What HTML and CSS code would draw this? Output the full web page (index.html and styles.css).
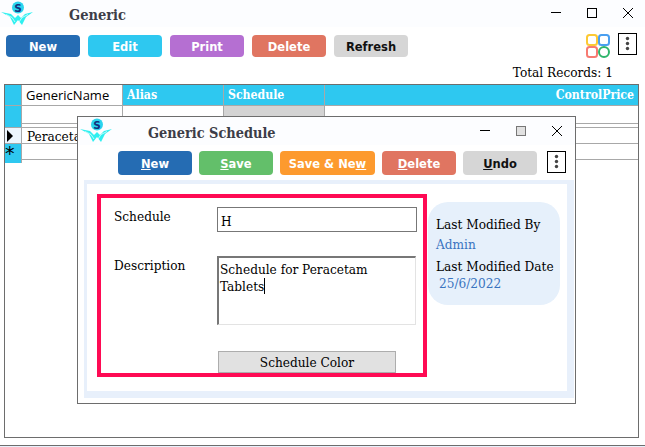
FILE: index.html
```html
<!DOCTYPE html>
<html lang="en">
<head>
    <meta charset="UTF-8">
    <meta name="viewport" content="width=device-width, initial-scale=1.0">
    <title>Generic</title>
    <link rel="stylesheet" href="styles.css">
</head>
<body>
    <svg class="defs" width="0" height="0">
        <symbol id="wings" viewBox="0 0 34 26">
            <path d="M1 11 L11 13 L15 17 L18 14 L21 17 L25 13 L33 11 L26 16 L22 24 L18 19 L14 24 L10 16 Z" fill="#2ff0f0"/>
            <path d="M6 13.5 L12 16.5 L15 21 M28 13.5 L22 16.5 L19 21" stroke="#fff" stroke-width="0.7" fill="none"/>
        </symbol>
        <symbol id="dots" viewBox="0 0 17 20">
            <circle cx="8.5" cy="4.5" r="1.7" fill="#444"/>
            <circle cx="8.5" cy="9.5" r="1.7" fill="#444"/>
            <circle cx="8.5" cy="14.5" r="1.7" fill="#444"/>
        </symbol>
    </svg>

    <div class="main-window">
        <header class="titlebar">
            <svg class="logo" viewBox="0 0 34 26">
                <circle cx="18" cy="6.5" r="6" fill="#2ad4ee"/>
                <text x="18" y="10.5" text-anchor="middle" class="logo-s">S</text>
                <use href="#wings" width="34" height="26"/>
            </svg>
            <h1 class="title">Generic</h1>
            <div class="win-controls">
                <svg class="win-icon" viewBox="0 0 12 12"><path d="M1 5.5H11" stroke="#000" fill="none"/></svg>
                <svg class="win-icon" viewBox="0 0 12 12"><rect x="1.5" y="1.5" width="9" height="9" stroke="#000" fill="none"/></svg>
                <svg class="win-icon" viewBox="0 0 12 12"><path d="M1 1L11 11M11 1L1 11" stroke="#000" fill="none"/></svg>
            </div>
        </header>

        <div class="toolbar">
            <button class="btn btn-blue">New</button>
            <button class="btn btn-cyan">Edit</button>
            <button class="btn btn-purple">Print</button>
            <button class="btn btn-red">Delete</button>
            <button class="btn btn-grey">Refresh</button>
            <svg class="apps-icon" viewBox="0 0 24 24" fill="none" stroke-width="2">
                <rect x="1" y="1" width="10" height="10" rx="2.5" stroke="#fcc934"/>
                <rect x="13" y="1" width="10" height="10" rx="2.5" stroke="#4a9ff0"/>
                <rect x="1" y="13" width="10" height="10" rx="2.5" stroke="#f77a72"/>
                <circle cx="18" cy="18" r="5" stroke="#2db56a"/>
            </svg>
            <div class="kebab"><svg><use href="#dots"/></svg></div>
        </div>

        <div class="total">Total Records: 1</div>

        <div class="grid">
            <div class="row row-head">
                <div class="row-mark"></div>
                <div class="cell cell-white">GenericName</div>
                <div class="cell cell-head">Alias</div>
                <div class="cell cell-head">Schedule</div>
                <div class="cell cell-head cell-right">ControlPrice</div>
            </div>
            <div class="row row-filter">
                <div class="row-mark"></div>
                <div class="cell"></div>
                <div class="cell"></div>
                <div class="cell cell-shade"></div>
                <div class="cell"></div>
            </div>
            <div class="row row-data">
                <div class="row-mark row-current"><span class="arrow"></span></div>
                <div class="cell cell-text">Peracetam</div>
                <div class="cell"></div>
                <div class="cell"></div>
                <div class="cell"></div>
            </div>
            <div class="row row-data">
                <div class="row-mark row-new">*</div>
                <div class="cell"></div>
                <div class="cell"></div>
                <div class="cell"></div>
                <div class="cell"></div>
            </div>
        </div>
    </div>

    <div class="bottom-line"></div>

    <!-- dialog window on top of the grid -->
    <div class="dialog">
        <header class="dialog-bar">
            <svg class="dialog-logo" viewBox="0 0 34 26">
                <circle cx="18" cy="6.5" r="6" fill="#2ad4ee"/>
                <text x="18" y="10.5" text-anchor="middle" class="logo-s">S</text>
                <use href="#wings" width="34" height="26"/>
            </svg>
            <h2 class="dialog-title">Generic Schedule</h2>
            <div class="win-controls win-controls-dialog">
                <svg class="win-icon" viewBox="0 0 12 12"><path d="M1 5.5H11" stroke="#000" fill="none"/></svg>
                <svg class="win-icon" viewBox="0 0 12 12"><rect x="1.5" y="1.5" width="9" height="9" stroke="#777" fill="#e1e1e1"/></svg>
                <svg class="win-icon" viewBox="0 0 12 12"><path d="M1 1L11 11M11 1L1 11" stroke="#000" fill="none"/></svg>
            </div>
        </header>

        <div class="dialog-toolbar">
            <button class="btn btn-tall btn-blue"><u>N</u>ew</button>
            <button class="btn btn-tall btn-green"><u>S</u>ave</button>
            <button class="btn btn-tall btn-wide btn-orange">Save &amp; Ne<u>w</u></button>
            <button class="btn btn-tall btn-red"><u>D</u>elete</button>
            <button class="btn btn-tall btn-grey"><u>U</u>ndo</button>
            <div class="kebab kebab-dialog"><svg><use href="#dots"/></svg></div>
        </div>

        <div class="panel">
            <form class="form-box">
                <div class="form-row form-row-first">
                    <label class="form-label">Schedule</label>
                    <div class="field field-input">H</div>
                </div>
                <div class="form-row">
                    <label class="form-label">Description</label>
                    <div class="field field-area">Schedule for Peracetam Tablets<span class="caret"></span></div>
                </div>
                <button type="button" class="color-btn">Schedule Color</button>
            </form>
            <aside class="info-card">
                <div class="info-label">Last Modified By</div>
                <div class="info-value">Admin</div>
                <div class="info-label info-label-date">Last Modified Date</div>
                <div class="info-value info-date">25/6/2022</div>
            </aside>
        </div>
    </div>
</body>
</html>
```

FILE: styles.css
```css
/* General */
body {
    margin: 0;
    width: 645px;
    height: 447px;
    overflow: hidden;
    position: relative;
    background: #fff;
    color: #000;
    font-family: "DejaVu Serif Condensed", "DejaVu Serif", serif;
    font-size: 13.5px;
}

.defs {
    position: absolute;
}

.logo-s {
    font-family: "DejaVu Sans", sans-serif;
    font-size: 10.5px;
    font-weight: bold;
    fill: #14307e;
}

/* Title bars */
.titlebar {
    height: 27px;
    display: flex;
    align-items: center;
    background: #fcfdff;
}

.logo {
    width: 34px;
    height: 26px;
    flex: none;
}

.title {
    margin: 2px 0 0 35px;
    font-size: 14.5px;
    font-weight: bold;
    color: #3d3d48;
}

.win-controls {
    margin: 7px 0 0 auto;
    align-self: flex-start;
    display: flex;
    gap: 24px;
    padding-right: 11px;
}

.win-controls-dialog {
    margin-top: 8px;
    padding-right: 12px;
}

.win-icon {
    width: 12px;
    height: 12px;
    display: block;
}

/* Buttons */
.toolbar {
    display: flex;
    align-items: flex-start;
    gap: 8px;
    padding: 8px 8px 0 6px;
    height: 26px;
}

.btn {
    width: 74px;
    height: 22px;
    padding: 1px 0 0;
    border: 0;
    border-radius: 4px;
    color: #fff;
    font-family: "DejaVu Sans", sans-serif;
    font-size: 11.5px;
    font-weight: bold;
    flex: none;
}

.btn-tall {
    height: 24px;
}

.btn-wide {
    width: 95px;
}

.btn-blue { background: #256cb3; }
.btn-cyan { background: #2ec8f0; }
.btn-purple { background: #b56fd2; }
.btn-red { background: #e07561; }
.btn-green { background: #63bf6a; }
.btn-orange { background: #fd9a2e; }
.btn-grey { background: #d6d6d6; color: #111; }

.apps-icon {
    width: 24px;
    height: 24px;
    margin: -1px 0 0 170px;
    flex: none;
}

.kebab {
    width: 19px;
    height: 22px;
    box-sizing: border-box;
    border: 1px solid #000;
    margin-top: -2px;
    flex: none;
}

.kebab svg {
    display: block;
    width: 17px;
    height: 20px;
}

.kebab-dialog {
    margin: 0 0 0 3px;
}

.total {
    height: 15px;
    padding: 4px 32px 0 0;
    text-align: right;
    line-height: 15px;
}

/* Grid */
.grid {
    margin: 4px 6px 0 4px;
    height: 354px;
    box-sizing: border-box;
    border: 1px solid #6d6d6d;
}

.row {
    display: grid;
    grid-template-columns: 17px 101px 101px 101px 1fr;
    height: 15px;
    border-bottom: 1px solid #a8a8a8;
    box-sizing: content-box;
}

.row-head {
    height: 20px;
}

.row-filter {
    height: 17px;
    padding-bottom: 4px;
    background: linear-gradient(#fff 17px, #a8a8a8 17px, #a8a8a8 18px, #fff 18px);
}

.row-filter .row-mark {
    margin-bottom: -4px;
}

.row-mark {
    background: #2ec8f0;
    border-right: 1px solid #a8a8a8;
    box-sizing: border-box;
}

.row-current {
    background: #edf6fe;
    display: flex;
    align-items: center;
}

.arrow {
    width: 0;
    height: 0;
    margin-left: 2px;
    border-left: 6px solid #000;
    border-top: 6px solid transparent;
    border-bottom: 6px solid transparent;
}

.row-new {
    line-height: 19px;
    font-size: 19px;
    font-family: "DejaVu Sans", sans-serif;
}

.cell {
    border-right: 1px solid #a8a8a8;
    box-sizing: border-box;
    padding: 0 4px;
    line-height: 20px;
    white-space: nowrap;
    overflow: hidden;
}

.cell:last-child {
    border-right: 0;
}

.cell-white {
    background: #fff;
    font-family: "Open Sans", sans-serif;
    font-size: 13px;
}

.cell-head {
    background: #2ec8f0;
    color: #fff;
    font-size: 12.2px;
    font-weight: bold;
    line-height: 21px;
}

.cell-right {
    text-align: right;
}

.cell-shade {
    background: #d3d3d3;
}

.cell-text {
    line-height: 17px;
    padding-left: 5px;
}

.bottom-line {
    position: absolute;
    left: 0;
    right: 0;
    top: 445px;
    height: 2px;
    box-sizing: border-box;
    border-top: 1px solid #6d6d6d;
    background: #e8f0fb;
}

/* Dialog */
.dialog {
    position: absolute;
    left: 77px;
    top: 116px;
    width: 499px;
    height: 288px;
    box-sizing: border-box;
    border: 1px solid #6d6d6d;
    background: #fff;
}

.dialog-bar {
    height: 28px;
    display: flex;
    align-items: center;
    background: #fcfdff;
}

.dialog-logo {
    width: 34px;
    height: 26px;
    margin-left: 1px;
    flex: none;
}

.dialog-title {
    margin: 2px 0 0 35px;
    font-size: 14.4px;
    font-weight: bold;
    color: #3d3d48;
}

.dialog-toolbar {
    display: flex;
    gap: 7px;
    padding: 6px 0 0 40px;
    height: 29px;
}

.panel {
    margin-left: 6px;
    width: 490px;
    height: 218px;
    box-sizing: border-box;
    border: solid #e8f0fb;
    border-width: 4px 7px 7px 3px;
    padding: 10px 0 0 10px;
    display: flex;
    align-items: flex-start;
}

/* Form */
.form-box {
    width: 330px;
    height: 183px;
    box-sizing: border-box;
    border: 4px solid #ff0a54;
    padding: 9px 0 0 13px;
    flex: none;
}

.form-row {
    display: flex;
    margin-bottom: 24px;
}

.form-label {
    width: 103px;
    line-height: 19px;
    flex: none;
}

.field {
    box-sizing: border-box;
    line-height: 17px;
}

.field-input {
    width: 200px;
    height: 25px;
    border: 1px solid #777;
    padding: 5px 3px;
}

.field-area {
    width: 199px;
    height: 69px;
    border: 1px solid;
    border-color: #777 #e3e3e3 #e3e3e3 #777;
    border-width: 2px 1px 1px 2px;
    padding: 3px 30px 3px 1px;
}

.caret {
    display: inline-block;
    width: 1px;
    height: 16px;
    background: #000;
    vertical-align: -3px;
}

.color-btn {
    display: block;
    width: 178px;
    height: 22px;
    margin: 26px 0 0 104px;
    padding: 0;
    border: 1px solid #adadad;
    background: #e1e1e1;
    color: #000;
    font: inherit;
}

/* Info card */
.info-card {
    width: 132px;
    height: 103px;
    margin: 8px 0 0 1px;
    box-sizing: border-box;
    padding: 12px 0 0 8px;
    background: #e6f0fb;
    border-radius: 20px;
    line-height: 20px;
    flex: none;
}

.info-label-date {
    margin-top: 2px;
}

.info-value {
    color: #3a74c0;
}

.info-date {
    padding-left: 3px;
    line-height: 14px;
}
```
